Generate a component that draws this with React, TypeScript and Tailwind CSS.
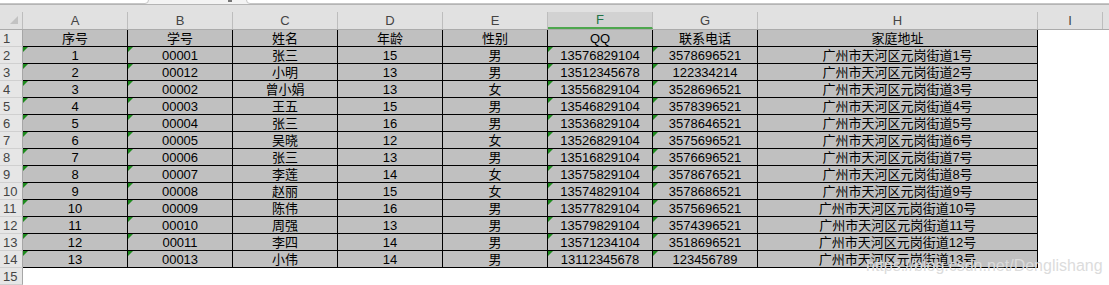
import React from "react";

const rows: string[][] = [
  ["1", "00001", "张三", "15", "男", "13576829104", "3578696521", "广州市天河区元岗街道1号"],
  ["2", "00012", "小明", "13", "男", "13512345678", "122334214", "广州市天河区元岗街道2号"],
  ["3", "00002", "曾小娟", "13", "女", "13556829104", "3528696521", "广州市天河区元岗街道3号"],
  ["4", "00003", "王五", "15", "男", "13546829104", "3578396521", "广州市天河区元岗街道4号"],
  ["5", "00004", "张三", "16", "男", "13536829104", "3578646521", "广州市天河区元岗街道5号"],
  ["6", "00005", "吴晓", "12", "女", "13526829104", "3575696521", "广州市天河区元岗街道6号"],
  ["7", "00006", "张三", "13", "男", "13516829104", "3576696521", "广州市天河区元岗街道7号"],
  ["8", "00007", "李莲", "14", "女", "13575829104", "3578676521", "广州市天河区元岗街道8号"],
  ["9", "00008", "赵丽", "15", "女", "13574829104", "3578686521", "广州市天河区元岗街道9号"],
  ["10", "00009", "陈伟", "16", "男", "13577829104", "3575696521", "广州市天河区元岗街道10号"],
  ["11", "00010", "周强", "13", "男", "13579829104", "3574396521", "广州市天河区元岗街道11号"],
  ["12", "00011", "李四", "14", "男", "13571234104", "3518696521", "广州市天河区元岗街道12号"],
  ["13", "00013", "小伟", "14", "男", "13112345678", "123456789", "广州市天河区元岗街道13号"],
];

const headers = ["序号", "学号", "姓名", "年龄", "性别", "QQ", "联系电话", "家庭地址"];
const letters = ["A", "B", "C", "D", "E", "F", "G", "H", "I"];
const greenCols = [0, 1, 5, 6];

const gridCols = "grid grid-cols-[23px_repeat(7,105px)_280px_65px_1fr]";
const font = { fontFamily: '"Liberation Sans", Arial, "Noto Sans CJK SC", sans-serif' };

function RowHead({ n }: { n: number }) {
  return (
    <div className="h-[17px] bg-[#e6e6e6] border-r border-r-[#a6a6a6] border-b border-b-[#d0d0d0] pl-[3px] text-[13px] leading-[17px] text-[#444444]">
      {n}
    </div>
  );
}

function Cell({ text, green }: { text: string; green?: boolean }) {
  return (
    <div className="relative h-[17px] bg-[#c0c0c0] border-r border-b border-black text-center text-[13px] leading-[17px] text-black whitespace-nowrap overflow-hidden">
      {green && (
        <span className="absolute left-0 top-0 w-0 h-0 border-t-[5px] border-t-[#1d8a1d] border-r-[5px] border-r-transparent" />
      )}
      {text}
    </div>
  );
}

export default function App() {
  return (
    <div className="relative w-[1109px] h-[285px] overflow-hidden bg-white select-none" style={font}>
      {/* top strip (formula bar remnants) */}
      <div className="relative h-[4px] bg-[#f3f3f3] border-b border-b-[#b4b4b4] box-content">
        <div className="absolute left-[-10px] top-[-10px] w-[159px] h-[14px] bg-white border border-[#c6c6c6] rounded-[4px]" />
        <div className="absolute left-[228px] top-0 w-[4px] h-[2px] bg-[#777777]" />
        <div className="absolute left-[246px] top-[-10px] w-[900px] h-[14px] bg-white border border-[#c6c6c6] rounded-[4px]" />
      </div>
      {/* header band */}
      <div className="h-[7px] bg-[#e1e1e1]" />
      {/* column headers */}
      <div className={`${gridCols} h-[18px] bg-[#e1e1e1] border-b border-b-[#ababab]`}>
        <div className="relative h-[17px] border-r border-r-[#bdbdbd]">
          <span className="absolute left-[10px] top-[4px] w-0 h-0 border-l-[8px] border-l-transparent border-b-[8px] border-b-[#c2c2c2]" />
        </div>
        {letters.map((l) =>
          l === "F" ? (
            <div
              key={l}
              className="h-[17px] bg-[#d2d2d2] border-r border-r-[#bdbdbd] border-b-2 border-b-[#4ea64e] text-center text-[13px] leading-[16px] text-[#217346]"
            >
              {l}
            </div>
          ) : (
            <div key={l} className="h-[17px] border-r border-r-[#bdbdbd] text-center text-[13px] leading-[17px] text-[#444444]">
              {l}
            </div>
          )
        )}
        <div />
      </div>
      {/* row 1: titles */}
      <div className={gridCols}>
        <RowHead n={1} />
        {headers.map((h) => (
          <Cell key={h} text={h} />
        ))}
        <div className="h-[17px]" />
        <div />
      </div>
      {rows.map((r, i) => (
        <div key={i} className={gridCols}>
          <RowHead n={i + 2} />
          {r.map((t, j) => (
            <Cell key={j} text={t} green={greenCols.includes(j)} />
          ))}
          <div className="h-[17px]" />
          <div />
        </div>
      ))}
      <div className={gridCols}>
        <RowHead n={15} />
      </div>
      {/* watermark */}
      <div className="absolute left-[866px] top-[256px] text-[16px] leading-[20px] text-[#dcdcdc] whitespace-nowrap">
        https://blog.csdn.net/Denglishang
      </div>
    </div>
  );
}
